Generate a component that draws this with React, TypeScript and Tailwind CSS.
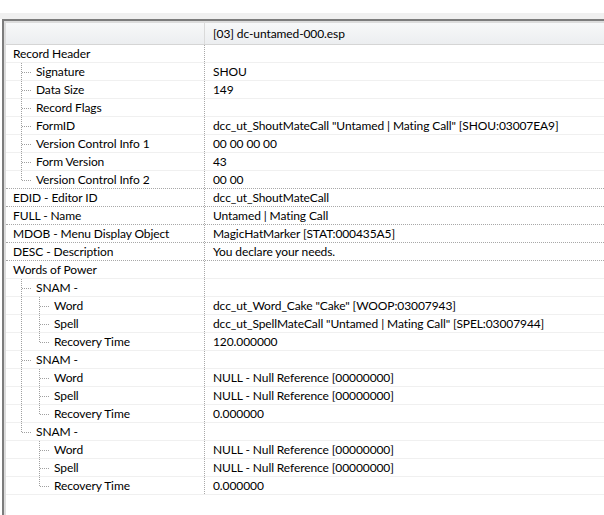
import React from "react";

type Row = {
  name: string;
  value?: string;
  guides: ("pipe" | "tee" | "end" | "none")[];
  dotted?: boolean;
};

const rows: Row[] = [
  { name: "Record Header", guides: [] },
  { name: "Signature", value: "SHOU", guides: ["tee"] },
  { name: "Data Size", value: "149", guides: ["tee"] },
  { name: "Record Flags", guides: ["tee"] },
  { name: "FormID", value: 'dcc_ut_ShoutMateCall "Untamed | Mating Call" [SHOU:03007EA9]', guides: ["tee"] },
  { name: "Version Control Info 1", value: "00 00 00 00", guides: ["tee"] },
  { name: "Form Version", value: "43", guides: ["tee"] },
  { name: "Version Control Info 2", value: "00 00", guides: ["end"], dotted: true },
  { name: "EDID - Editor ID", value: "dcc_ut_ShoutMateCall", guides: [], dotted: true },
  { name: "FULL - Name", value: "Untamed | Mating Call", guides: [], dotted: true },
  { name: "MDOB - Menu Display Object", value: "MagicHatMarker [STAT:000435A5]", guides: [], dotted: true },
  { name: "DESC - Description", value: "You declare your needs.", guides: [], dotted: true },
  { name: "Words of Power", guides: [] },
  { name: "SNAM -", guides: ["tee"] },
  { name: "Word", value: 'dcc_ut_Word_Cake "Cake" [WOOP:03007943]', guides: ["pipe", "tee"] },
  { name: "Spell", value: 'dcc_ut_SpellMateCall "Untamed | Mating Call" [SPEL:03007944]', guides: ["pipe", "tee"] },
  { name: "Recovery Time", value: "120.000000", guides: ["pipe", "end"] },
  { name: "SNAM -", guides: ["tee"] },
  { name: "Word", value: "NULL - Null Reference [00000000]", guides: ["pipe", "tee"] },
  { name: "Spell", value: "NULL - Null Reference [00000000]", guides: ["pipe", "tee"] },
  { name: "Recovery Time", value: "0.000000", guides: ["pipe", "end"] },
  { name: "SNAM -", guides: ["end"] },
  { name: "Word", value: "NULL - Null Reference [00000000]", guides: ["none", "tee"] },
  { name: "Spell", value: "NULL - Null Reference [00000000]", guides: ["none", "tee"] },
  { name: "Recovery Time", value: "0.000000", guides: ["none", "end"] },
];

function Guide({ kind }: { kind: "pipe" | "tee" | "end" | "none" }) {
  return (
    <span className="relative w-[18px] h-full shrink-0">
      {kind !== "none" && (
        <span
          className={`absolute left-[8px] top-0 border-l border-dotted border-[#a0a0a0] ${
            kind === "end" ? "h-[9px]" : "h-full"
          }`}
        />
      )}
      {(kind === "tee" || kind === "end") && (
        <span className="absolute left-[9px] top-[9px] w-[9px] border-t border-dotted border-[#a0a0a0]" />
      )}
    </span>
  );
}

export default function App() {
  return (
    <div
      className="w-[604px] h-[515px] bg-white flex flex-col overflow-hidden text-[12px] tracking-[-0.1px] text-[#000]"
      style={{ fontFamily: 'Lato, "Noto Sans", sans-serif' }}
    >
      <div className="h-[13px] shrink-0 bg-white" />
      <div className="h-[6px] shrink-0 bg-[#f0f0f0]" />
      <div className="flex-1 flex flex-col ml-[2px] border-t-2 border-l-2 border-[#7c7c7c]">
        <div className="flex-1 flex flex-col border-t-2 border-l-2 border-[#dcdcdc]">
          {/* header */}
          <div className="h-[22px] shrink-0 flex bg-gradient-to-b from-[#f7f8f9] to-[#eceef0] border-b border-[#d5d5d5]">
            <div className="w-[199px] shrink-0 border-r border-[#dadada]" />
            <div className="pl-[8px] flex items-center leading-none whitespace-nowrap">[03] dc-untamed-000.esp</div>
          </div>
          {/* rows */}
          {rows.map((r, i) => (
            <div
              key={i}
              className={`h-[18px] shrink-0 flex border-b ${
                r.dotted ? "border-dotted border-[#a8a8a8]" : "border-solid border-[#f0f0f0]"
              }`}
            >
              <div className="w-[199px] shrink-0 flex items-stretch pl-[7px] border-r border-dotted border-[#a8a8a8]">
                {r.guides.map((g, j) => (
                  <Guide key={j} kind={g} />
                ))}
                <span className={`flex items-center whitespace-nowrap ${r.guides.length ? "pl-[5px]" : ""}`}>
                  {r.name}
                </span>
              </div>
              <div className="pl-[8px] flex items-center whitespace-nowrap">{r.value}</div>
            </div>
          ))}
          <div className="flex-1" />
        </div>
      </div>
    </div>
  );
}
